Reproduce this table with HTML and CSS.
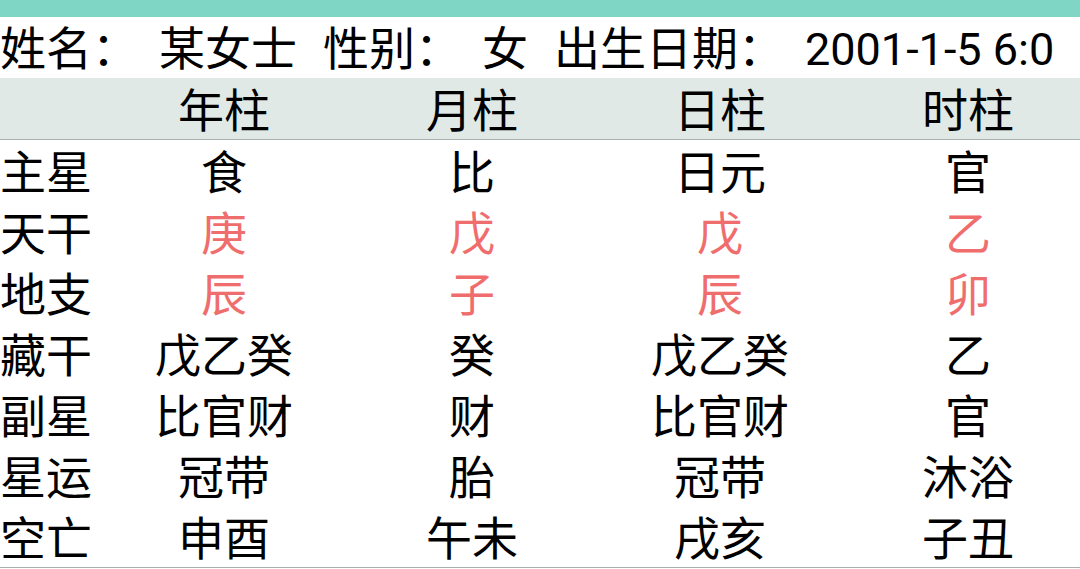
FILE: index.html
```html
<!DOCTYPE html>
<html lang="zh-CN">
<head>
<meta charset="utf-8">
<title>八字排盘</title>
<link rel="stylesheet" href="styles.css">
</head>
<body>
<div class="topbar"></div>
<div class="info">
  <span class="k">姓名：</span><span class="v">某女士</span>
  <span class="k">性别：</span><span class="v">女</span>
  <span class="k">出生日期：</span><span class="v num">2001-1-5 6:0</span>
</div>
<div class="head">
  <div class="grid">
    <div class="lab"></div>
    <div class="cell">年柱</div>
    <div class="cell">月柱</div>
    <div class="cell">日柱</div>
    <div class="cell">时柱</div>
  </div>
</div>
<div class="body">
  <div class="grid">
    <div class="lab">主星</div><div class="cell">食</div><div class="cell">比</div><div class="cell">日元</div><div class="cell">官</div>
  </div>
  <div class="grid">
    <div class="lab">天干</div><div class="cell red">庚</div><div class="cell red">戊</div><div class="cell red">戊</div><div class="cell red">乙</div>
  </div>
  <div class="grid">
    <div class="lab">地支</div><div class="cell red">辰</div><div class="cell red">子</div><div class="cell red">辰</div><div class="cell red">卯</div>
  </div>
  <div class="grid">
    <div class="lab">藏干</div><div class="cell">戊乙癸</div><div class="cell">癸</div><div class="cell">戊乙癸</div><div class="cell">乙</div>
  </div>
  <div class="grid">
    <div class="lab">副星</div><div class="cell">比官财</div><div class="cell">财</div><div class="cell">比官财</div><div class="cell">官</div>
  </div>
  <div class="grid">
    <div class="lab">星运</div><div class="cell">冠带</div><div class="cell">胎</div><div class="cell">冠带</div><div class="cell">沐浴</div>
  </div>
  <div class="grid">
    <div class="lab">空亡</div><div class="cell">申酉</div><div class="cell">午未</div><div class="cell">戌亥</div><div class="cell">子丑</div>
  </div>
</div>
</body>
</html>
```

FILE: styles.css
```css
html, body {
  margin: 0;
  padding: 0;
  background: #ffffff;
}
body {
  width: 1080px;
  height: 569px;
  overflow: hidden;
  font-family: Roboto, "Noto Sans CJK SC", sans-serif;
  font-size: 46px;
  color: #000000;
}
.topbar {
  height: 17px;
  background: #7fd6c5;
}
.info {
  display: flex;
  align-items: flex-start;
  height: 61px;
  line-height: 65px;
  white-space: nowrap;
}
.info .v {
  margin-left: 21px;
}
.info .k {
  margin-left: 26px;
}
.info .k:first-child {
  margin-left: 0;
}
.info .num {
  font-size: 45px;
}
.head {
  background: #e1e9e7;
  border-bottom: 1px solid #a9b1af;
  overflow: hidden;
}
.body {
  border-bottom: 1px solid #a9b1af;
  overflow: hidden;
}
.grid {
  display: grid;
  grid-template-columns: 100px repeat(4, 248px);
  grid-template-rows: 61px;
  width: 1092px;
  height: 61px;
  line-height: 67px;
  white-space: nowrap;
}
.lab {
  text-align: left;
}
.cell {
  text-align: center;
}
.red {
  color: #f06d6d;
}
```
